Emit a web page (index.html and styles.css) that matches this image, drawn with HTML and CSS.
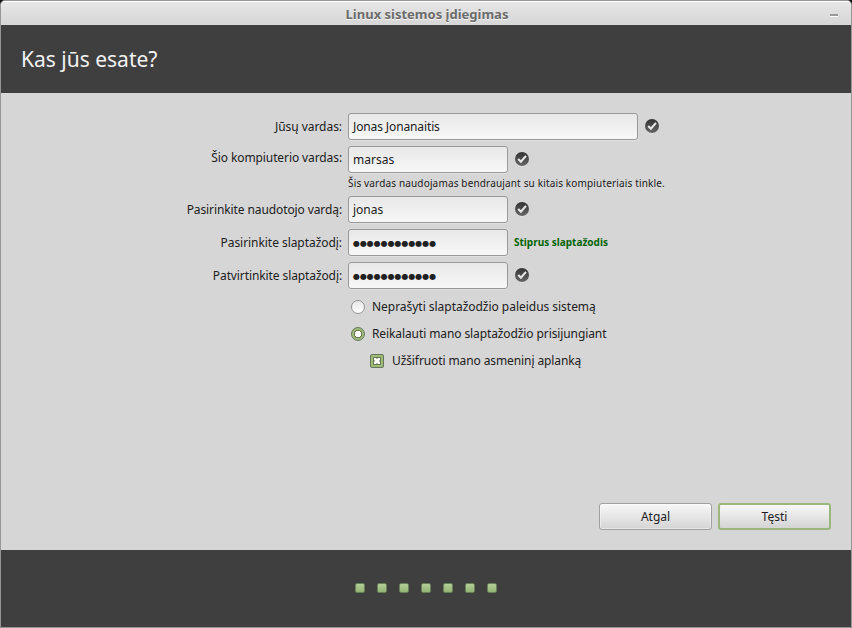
FILE: index.html
```html
<!DOCTYPE html>
<html lang="lt">
<head>
<meta charset="utf-8">
<title>Linux sistemos įdiegimas</title>
<link rel="stylesheet" href="styles.css">
</head>
<body>
<svg class="defs" width="0" height="0" aria-hidden="true">
  <linearGradient id="disc" x1="0" y1="0" x2="0" y2="1"><stop offset="0" stop-color="#333"/><stop offset="1" stop-color="#666"/></linearGradient>
  <symbol id="ok" viewBox="0 0 16 16">
    <circle cx="8" cy="8.6" r="7" fill="#eee" opacity=".65"/>
    <circle cx="8" cy="8" r="7" fill="url(#disc)"/>
    <path d="M4.2 7.9 6.9 10.7 12 4.9" fill="none" stroke="#e8e8e8" stroke-width="2.1"/>
  </symbol>
</svg>
<div class="window">
  <header class="titlebar"><span class="title">Linux sistemos įdiegimas</span><span class="minimize"></span></header>
  <div class="banner"><h1>Kas jūs esate?</h1></div>
  <main>
    <div class="row"><span class="label short">Jūsų vardas:</span><span class="field wide">Jonas Jonanaitis</span><svg class="ok"><use href="#ok"/></svg></div>
    <div class="row host"><span class="label">Šio kompiuterio vardas:</span><span class="field">marsas</span><svg class="ok"><use href="#ok"/></svg></div>
    <div class="hint">Šis vardas naudojamas bendraujant su kitais kompiuteriais tinkle.</div>
    <div class="row"><span class="label">Pasirinkite naudotojo vardą:</span><span class="field">jonas</span><svg class="ok"><use href="#ok"/></svg></div>
    <div class="row"><span class="label short">Pasirinkite slaptažodį:</span><span class="field password">●●●●●●●●●●●●</span><span class="strength">Stiprus slaptažodis</span></div>
    <div class="row"><span class="label">Patvirtinkite slaptažodį:</span><span class="field password">●●●●●●●●●●●●</span><svg class="ok"><use href="#ok"/></svg></div>
    <div class="option loose"><span class="radio"></span><span>Neprašyti slaptažodžio paleidus sistemą</span></div>
    <div class="option"><span class="radio checked"></span><span>Reikalauti mano slaptažodžio prisijungiant</span></div>
    <div class="option nested"><span class="checkbox"><svg width="8" height="8" viewBox="0 0 8 8"><path d="M0 0h8v8H0z" fill="#667952"/><path d="M1 1h2l1 1 1-1h2v2L6 4l1 1v2H5L4 6 3 7H1V5l1-1-1-1z" fill="#fff"/></svg></span><span>Užšifruoti mano asmeninį aplanką</span></div>
    <div class="actions"><span class="button">Atgal</span><span class="button primary">Tęsti</span></div>
  </main>
  <footer><i></i><i></i><i></i><i></i><i></i><i></i><i></i></footer>
</div>
</body>
</html>
```
FILE: styles.css
```css
* { box-sizing: border-box; }
body { margin: 0; background: #151318; font: 12px/18px "Noto Sans", sans-serif; color: #212121; }
.defs { position: absolute; }
.window { width: 852px; height: 628px; display: flex; flex-direction: column; border: 1px solid #969696; border-radius: 5px 5px 0 0; overflow: hidden; background: #d6d6d6; }
.titlebar { height: 24px; flex: none; display: grid; grid-template-columns: 1fr auto 1fr; align-items: center; padding: 0 13px; background: linear-gradient(#e6e6e6, #d6d6d6); border-top: 1px solid #fff; }
.title { grid-column: 2; padding-left: 2px; font-size: 13px; font-weight: bold; color: #6b6b6b; text-shadow: 0 1px #f5f5f5; }
.minimize { justify-self: end; width: 8px; height: 3px; margin-top: 4px; background: #999; border-bottom: 1px solid #fff; }
.banner { height: 68px; flex: none; display: flex; align-items: center; padding-left: 20px; background: #3f3f3f; }
h1 { margin: 0; font-size: 21px; line-height: 28px; font-weight: 400; color: #f2f2f2; }
main { flex: 1; display: flex; flex-direction: column; padding: 20px 20px 20px 0; }
.row { display: flex; align-items: center; height: 27px; margin-bottom: 6px; }
.row.host { margin-bottom: 0; }
.label { width: 341px; text-align: right; margin-right: 6px; letter-spacing: -.1px; }
.label.short { letter-spacing: -.05px; }
.host .label { margin-top: -4px; }
.field { width: 160px; height: 27px; padding: 0 4px; border: 1px solid #999; border-radius: 3px; line-height: 25px; background: linear-gradient(#e8e8e8, #f7f7f7); box-shadow: 0 1px #e0e0e0; }
.field.wide { width: 290px; letter-spacing: -.12px; }
.password { font-family: "DejaVu Sans", sans-serif; font-size: 8px; letter-spacing: -.05px; line-height: 27px; }
.ok { width: 16px; height: 16px; margin: -2px 0 0 6px; }
.hint { height: 23px; padding: 0 0 2px 347px; line-height: 20px; font-size: 10px; letter-spacing: .155px; }
.strength { margin: -2px 0 0 6px; font-size: 10px; font-weight: bold; color: #006400; }
.option { display: flex; align-items: center; height: 27px; padding-left: 350px; letter-spacing: -.1px; }
.option.loose { margin-top: -2px; letter-spacing: -.03px; }
.option.nested { padding-left: 369px; }
.radio { width: 14px; height: 14px; margin-right: 7px; border: 1px solid #929292; border-radius: 50%; background: linear-gradient(#e8e8e8, #fff); }
.radio.checked { background: radial-gradient(circle, #fff 0 3px, #68794f 3.5px 4px, #9dbd78 4.5px); border-color: #66745a; }
.checkbox { width: 14px; height: 14px; margin-right: 8px; border: 1px solid #66745a; border-radius: 2px; background: #9dbd78; display: flex; align-items: center; justify-content: center; }
.actions { margin-top: auto; display: flex; justify-content: flex-end; gap: 6px; }
.button { width: 113px; height: 27px; border: 1px solid #a0a0a0; border-radius: 3px; background: linear-gradient(#f8f8f8, #d4d4d4); box-shadow: inset 0 0 0 1px #ffffff66; text-align: center; line-height: 25px; }
.button.primary { border: 2px solid #9ab87c; line-height: 23px; box-shadow: none; }
footer { height: 77px; flex: none; display: flex; justify-content: center; align-items: center; gap: 12px; padding-bottom: 2px; background: #3f3f3f; }
footer i { width: 10px; height: 10px; border: 1px solid #69805a; border-radius: 2px; background: linear-gradient(#b4cf98, #93b474); }
```
